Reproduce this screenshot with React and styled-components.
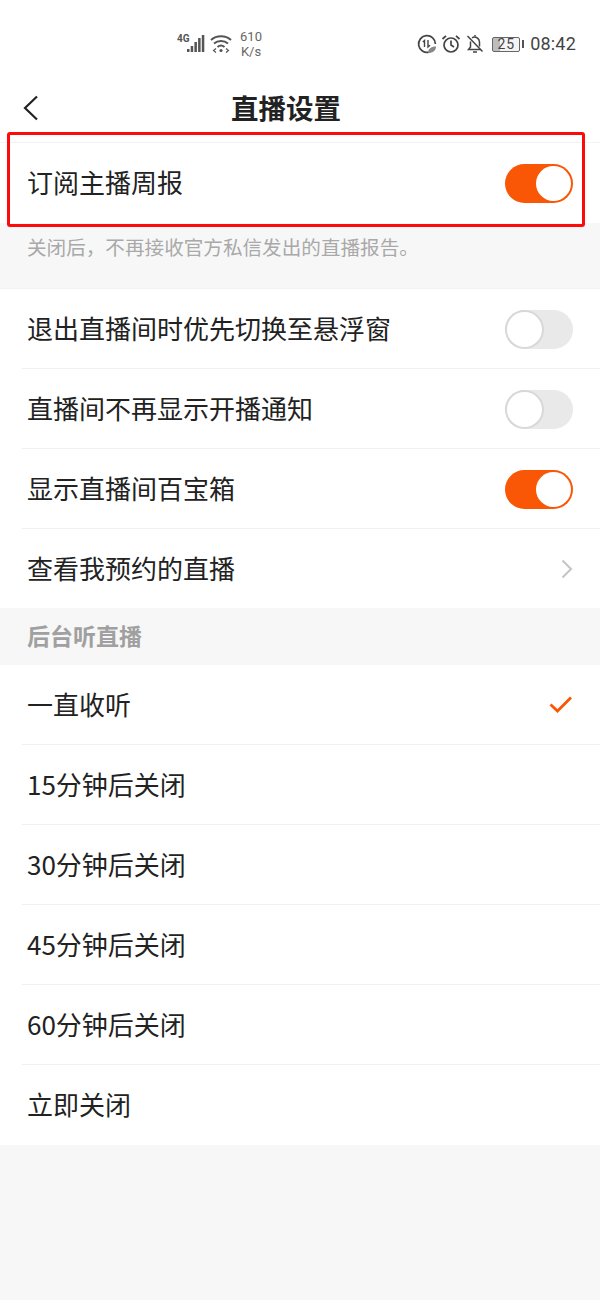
import React from 'react';
import styled, { createGlobalStyle } from 'styled-components';

const GlobalStyle = createGlobalStyle`
  html, body {
    margin: 0;
    padding: 0;
    background: #f7f7f7;
  }
  * {
    box-sizing: border-box;
  }
`;

const orange = '#f95705';
const cjk = `"Noto Sans CJK SC", "Noto Sans", sans-serif`;

const Page = styled.div`
  width: 600px;
  height: 1300px;
  position: relative;
  overflow: hidden;
  background: #f7f7f7;
  font-family: ${cjk};
`;

const StatusBar = styled.div`
  height: 72px;
  background: #fff;
  display: flex;
  align-items: center;
  justify-content: space-between;
  padding: 16px 24px 0 176px;
  color: #555;
`;

const StatusGroup = styled.div`
  display: flex;
  align-items: center;
  gap: ${props => props.gap || 0}px;
`;

const Speed = styled.div`
  font: 13px/15px Roboto, sans-serif;
  text-align: center;
  color: #666;
  margin-left: 3px;
  width: 24px;
`;

const Battery = styled.div`
  width: 28px;
  height: 15px;
  margin-left: 3px;
  border: 1px solid #666;
  border-radius: 2px;
  background: linear-gradient(90deg, #bdbdbd 26%, #f4f4f4 26%);
  font: 14px/13px Roboto, sans-serif;
  text-align: center;
  color: #444;
  letter-spacing: 0.8px;
`;

const BatteryTip = styled.span`
  width: 2px;
  height: 8px;
  background: #555;
  margin-left: -2px;
`;

const Clock = styled.div`
  font: 18px/24px Roboto, sans-serif;
  color: #444;
  margin-left: 2px;
  letter-spacing: 0.2px;
`;

const Header = styled.header`
  height: 70px;
  background: #fff;
  display: flex;
  align-items: center;
  justify-content: center;
  position: relative;
`;

const Back = styled.svg`
  position: absolute;
  left: 22px;
  top: 23px;
`;

const Title = styled.h1`
  margin: 0 0 0 -28px;
  font-size: 27.500px;
  line-height: 36px;
  font-weight: 700;
  color: #222;
`;

const Group = styled.section`
  background: #fff;
  border-top: ${props => (props.plain ? 'none' : '1px solid #f2f2f2')};
`;

const Row = styled.div`
  height: 80px;
  padding: 0 27px;
  display: flex;
  align-items: center;
  justify-content: space-between;
  position: relative;
  color: #222;

  & + &::before {
    content: '';
    position: absolute;
    left: 22px;
    right: 0;
    top: -1px;
    height: 1px;
    background: #f0f0f0;
  }
`;

const Label = styled.span`
  font-size: 26px;
  line-height: 36px;
  margin-top: -3px;
`;

const Note = styled.div`
  height: 65px;
  padding: 10px 27px 0;
  font-size: 19.600px;
  line-height: 28px;
  color: #a9a9a9;
`;

const SectionTitle = styled.div`
  height: 57px;
  margin-top: -1px;
  padding: 0 27px 3px;
  display: flex;
  align-items: center;
  background: #f7f7f7;
  font-size: 23px;
  font-weight: 700;
  color: #a0a0a0;
`;

const Track = styled.div`
  width: 68px;
  height: 39px;
  border-radius: 20px;
  padding: 2px;
  display: flex;
  justify-content: ${props => (props.on ? 'flex-end' : 'flex-start')};
  background: ${props => (props.on ? orange : '#e9e9e9')};
`;

const Knob = styled.span`
  width: 35px;
  height: 35px;
  border-radius: 50%;
  background: #fff;
  box-shadow: ${props => (props.on ? 'none' : '0 0 0 2px #d8d8d8')};
`;

const Highlight = styled.div`
  position: absolute;
  left: 7px;
  top: 132px;
  width: 578px;
  height: 95px;
  border: 3.500px solid #fd0a0a;
  border-radius: 3px;
  pointer-events: none;
`;

const Toggle = ({ on }) => (
  <Track on={on ? 1 : 0}>
    <Knob on={on ? 1 : 0} />
  </Track>
);

const Signal = () => (
  <svg width="30" height="24" viewBox="0 0 30 24">
    <text x="1" y="10" fontFamily="Roboto, sans-serif" fontSize="10" fontWeight="700" fill="#555">4G</text>
    <g fill="#555">
      <rect x="11" y="17" width="2.500" height="3" />
      <rect x="14.700" y="14" width="2.500" height="6" />
      <rect x="18.400" y="10" width="2.500" height="10" />
      <rect x="22.100" y="6" width="2.500" height="14" />
      <rect x="25.800" y="3" width="2.500" height="17" />
    </g>
  </svg>
);

const Wifi = () => (
  <svg width="24" height="24" viewBox="0 0 24 24" fill="none" stroke="#555" strokeWidth="2">
    <path d="M2 8c5.500-5 14.500-5 20 0" />
    <path d="M5 11.500c3.800-3.300 10.200-3.300 14 0" />
    <path d="M8.500 15c2-1.700 5-1.700 7 0" />
    <circle cx="12" cy="18.500" r="1.600" fill="#555" stroke="none" />
    <path d="M7 16.500l-2.500 2 2.500 2M17 16.500l2.500 2-2.500 2" strokeWidth="1.200" />
  </svg>
);

const DataSaver = () => (
  <svg width="20" height="20" viewBox="0 0 20 20" fill="none" stroke="#444" strokeWidth="1.700">
    <path d="M12 18.200A8.400 8.400 0 1 1 18.400 10" />
    <path d="M7.500 13V6.500L5.800 8M11 6v7l2-1.800" strokeWidth="1.400" />
    <path d="M11 19c0-4 3-6.500 8-6.500 0 4-3 6.500-8 6.500z" fill="#888" stroke="none" />
  </svg>
);

const Alarm = () => (
  <svg width="20" height="20" viewBox="0 0 20 20" fill="none" stroke="#444" strokeWidth="1.700">
    <circle cx="10" cy="11" r="7" />
    <path d="M10 6.500V11l3 2" />
    <path d="M1.500 5L5 1.800M18.500 5L15 1.800" />
  </svg>
);

const BellOff = () => (
  <svg width="20" height="20" viewBox="0 0 20 20" fill="none" stroke="#444" strokeWidth="1.500">
    <path d="M5.500 7.500V13l-2 2.500h12M7 3.800A5 5 0 0 1 14.500 8v4.500" />
    <path d="M8 18h4M10 1v1.500" />
    <path d="M2.500 2l15 15.500" />
  </svg>
);

const Chevron = () => (
  <svg width="12" height="20" viewBox="0 0 12 20" fill="none" stroke="#c4c4c4" strokeWidth="2">
    <path d="M1.500 1.500L10 10l-8.500 8.500" />
  </svg>
);

const Check = () => (
  <svg width="24" height="18" viewBox="0 0 24 18" fill="none" stroke={orange} strokeWidth="2.800">
    <path d="M1.500 8.500L8.500 15 22 1.500" />
  </svg>
);

const options = ['一直收听', '15分钟后关闭', '30分钟后关闭', '45分钟后关闭', '60分钟后关闭', '立即关闭'];

export default function App() {
  return (
    <Page>
      <GlobalStyle />
      <StatusBar>
        <StatusGroup gap={3}>
          <Signal />
          <Wifi />
          <Speed>610<br />K/s</Speed>
        </StatusGroup>
        <StatusGroup gap={4}>
          <DataSaver />
          <Alarm />
          <BellOff />
          <Battery>25</Battery>
          <BatteryTip />
          <Clock>08:42</Clock>
        </StatusGroup>
      </StatusBar>
      <Header>
        <Back width="18" height="26" viewBox="0 0 18 26" fill="none" stroke="#222" strokeWidth="2.200">
          <path d="M15 1.500L3 13l12 11.500" />
        </Back>
        <Title>直播设置</Title>
      </Header>
      <Group>
        <Row><Label>订阅主播周报</Label><Toggle on /></Row>
      </Group>
      <Note>关闭后，不再接收官方私信发出的直播报告。</Note>
      <Group>
        <Row><Label>退出直播间时优先切换至悬浮窗</Label><Toggle /></Row>
        <Row><Label>直播间不再显示开播通知</Label><Toggle /></Row>
        <Row><Label>显示直播间百宝箱</Label><Toggle on /></Row>
        <Row><Label>查看我预约的直播</Label><Chevron /></Row>
      </Group>
      <SectionTitle>后台听直播</SectionTitle>
      <Group plain>
        {options.map((o, i) => (
          <Row key={o}><Label>{o}</Label>{i === 0 && <Check />}</Row>
        ))}
      </Group>
      <Highlight />
    </Page>
  );
}
